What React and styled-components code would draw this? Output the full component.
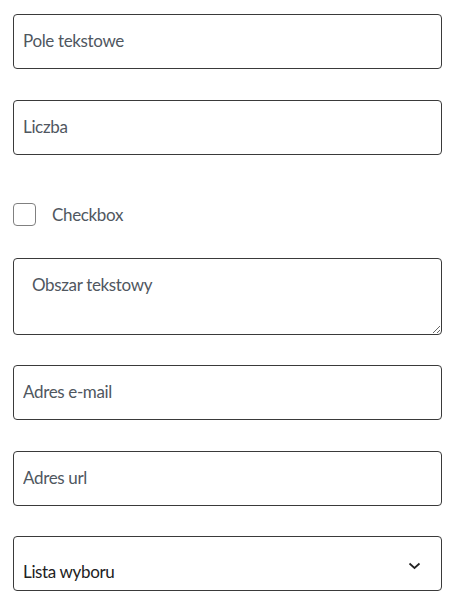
import React from "react";
import styled, { createGlobalStyle } from "styled-components";

const Global = createGlobalStyle`
  html, body { margin: 0; padding: 0; background: #fff; }
  body { font-family: Lato, "Liberation Sans", sans-serif; }
`;

const Form = styled.form`
  display: flex;
  flex-direction: column;
  gap: 30.5px;
  padding: 14px 10px 16px 13px;
  width: 429px;
`;

const fieldBase = `
  box-sizing: border-box;
  width: 429px;
  border: 1px solid #3a3a3a;
  border-radius: 4px;
  font-family: Lato, "Liberation Sans", sans-serif;
  font-size: 17px;
  letter-spacing: -0.35px;
  color: #222;
  background: #fff;
  margin: 0;
  outline: none;
`;

const Input = styled.input`
  ${fieldBase}
  height: 55px;
  padding: 0 9px 2px;
  &::placeholder { color: #50575f; opacity: 1; }
`;

const TextArea = styled.textarea`
  ${fieldBase}
  display: block;
  height: 76.5px;
  padding: 16px 18px;
  resize: vertical;
  line-height: 20px;
  &::placeholder { color: #50575f; opacity: 1; }
`;

const CheckRow = styled.label`
  display: flex;
  align-items: center;
  gap: 16px;
  padding: 18px 0 1.5px;
  font-family: Lato, "Liberation Sans", sans-serif;
  font-size: 17px;
  letter-spacing: -0.35px;
  line-height: 20px;
  color: #50575f;
`;

const Box = styled.span`
  box-sizing: border-box;
  width: 23px;
  height: 23px;
  border: 1px solid #808080;
  border-radius: 4px;
  background: #fff;
`;

const SelectWrap = styled.div`
  ${fieldBase}
  height: 55px;
  display: flex;
  align-items: flex-end;
  padding: 0 16px 8px 9px;
  position: relative;
  line-height: 20px;
`;

const SelectText = styled.span`
  color: #222;
`;

const Chevron = styled.svg`
  position: absolute;
  right: 20px;
  top: 25px;
`;

export default function App() {
  return (
    <>
      <Global />
      <Form onSubmit={(e) => e.preventDefault()}>
        <Input type="text" placeholder="Pole tekstowe" />
        <Input type="text" placeholder="Liczba" />
        <CheckRow>
          <Box />
          Checkbox
        </CheckRow>
        <TextArea placeholder="Obszar tekstowy" />
        <Input type="text" placeholder="Adres e-mail" />
        <Input type="text" placeholder="Adres url" />
        <SelectWrap>
          <SelectText>Lista wyboru</SelectText>
          <Chevron width="13" height="8" viewBox="0 0 13 8">
            <path d="M1.5 1.5 L6.5 6 L11.5 1.5" fill="none" stroke="#222" strokeWidth="1.7" />
          </Chevron>
        </SelectWrap>
      </Form>
    </>
  );
}
